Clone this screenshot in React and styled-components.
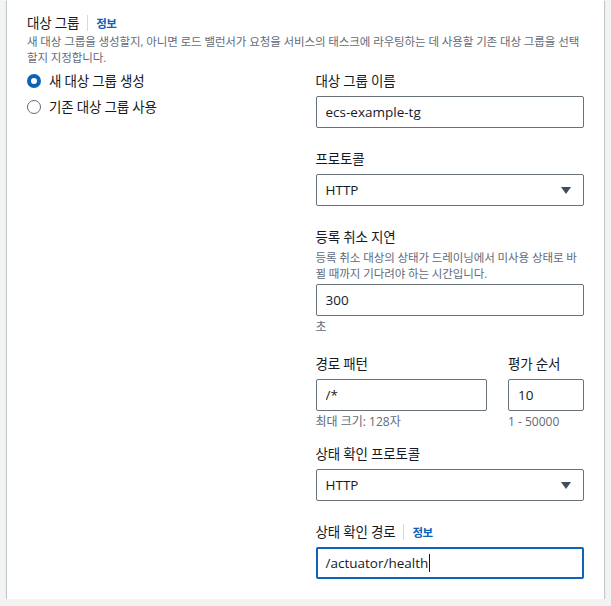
import styled, { createGlobalStyle } from "styled-components";

const GlobalStyle = createGlobalStyle`
  body {
    margin: 0;
    background: #f2f3f3;
    font-family: "Open Sans", "Noto Sans CJK KR", sans-serif;
    color: #16191f;
  }
`;

export default function App() {
  return (
    <>
      <GlobalStyle />
      <Panel>
        <Header>
          <Title>대상 그룹</Title>
          <Divider />
          <InfoLink>정보</InfoLink>
        </Header>
        <Description>
          새 대상 그룹을 생성할지, 아니면 로드 밸런서가 요청을 서비스의 태스크에 라우팅하는 데 사용할 기존 대상 그룹을 선택
          <br />
          할지 지정합니다.
        </Description>
        <Grid>
          <RadioList>
            <RadioRow>
              <RadioDot $checked />
              <RadioLabel>새 대상 그룹 생성</RadioLabel>
            </RadioRow>
            <RadioRow>
              <RadioDot />
              <RadioLabel>기존 대상 그룹 사용</RadioLabel>
            </RadioRow>
          </RadioList>

          <Column>
            <Field>
              <Label>대상 그룹 이름</Label>
              <TextInput readOnly value="ecs-example-tg" />
            </Field>

            <Field>
              <Label>프로토콜</Label>
              <SelectBox>
                <span>HTTP</span>
                <SelectArrow />
              </SelectBox>
            </Field>

            <Field>
              <Label>등록 취소 지연</Label>
              <FieldDescription>
                등록 취소 대상의 상태가 드레이닝에서 미사용 상태로 바
                <br />
                뀔 때까지 기다려야 하는 시간입니다.
              </FieldDescription>
              <TextInput $tight readOnly value="300" />
              <Hint>초</Hint>
            </Field>

            <SplitRow>
              <Field>
                <Label>경로 패턴</Label>
                <TextInput readOnly value="/*" />
                <Hint>최대 크기: 128자</Hint>
              </Field>
              <Field>
                <Label>평가 순서</Label>
                <TextInput readOnly value="10" />
                <Hint>1 - 50000</Hint>
              </Field>
            </SplitRow>

            <Field>
              <Label>상태 확인 프로토콜</Label>
              <SelectBox>
                <span>HTTP</span>
                <SelectArrow />
              </SelectBox>
            </Field>

            <Field>
              <LabelRow>
                <Label>상태 확인 경로</Label>
                <Divider />
                <InfoLink>정보</InfoLink>
              </LabelRow>
              <FocusedInput role="textbox">
                /actuator/health
                <Caret />
              </FocusedInput>
            </Field>
          </Column>
        </Grid>
      </Panel>
    </>
  );
}

function SelectArrow() {
  return (
    <svg width="10" height="7" viewBox="0 0 10 7">
      <polygon points="0,0 10,0 5,7" fill="#414d5c" />
    </svg>
  );
}

const Panel = styled.div`
  margin: 0 7px;
  padding: 12px 20px 20px 20px;
  background: #ffffff;
  box-shadow: 0 1px 1px 0 rgba(0, 28, 36, 0.3),
    1px 1px 1px 0 rgba(0, 28, 36, 0.15),
    -1px 1px 1px 0 rgba(0, 28, 36, 0.15);
`;

const Header = styled.div`
  display: flex;
  align-items: center;
  height: 22px;
`;

const LabelRow = styled(Header)``;

const Title = styled.span`
  font-size: 13.5px;
  letter-spacing: -0.2px;
  line-height: 22px;
`;

const Divider = styled.span`
  width: 1px;
  height: 16px;
  background: #d5dbdb;
  margin: 0 8px;
`;

const InfoLink = styled.a`
  font-size: 11.5px;
  font-weight: 700;
  letter-spacing: -0.5px;
  color: #0c63b8;
  cursor: pointer;
`;

const Description = styled.p`
  margin: 0;
  font-size: 11.5px;
  letter-spacing: -0.1px;
  line-height: 16px;
  white-space: nowrap;
  color: #5f6b7a;
`;

const Grid = styled.div`
  display: grid;
  grid-template-columns: 1fr 1fr;
  column-gap: 20px;
  margin-top: 4px;
`;

const RadioList = styled.div`
  display: flex;
  flex-direction: column;
  gap: 4px;
`;

const RadioRow = styled.label`
  display: flex;
  align-items: center;
  gap: 8px;
  height: 22px;
`;

const RadioDot = styled.span`
  width: 14px;
  height: 14px;
  box-sizing: border-box;
  border-radius: 50%;
  background: #ffffff;
  border: ${(p) => (p.$checked ? "4px solid #0c63b8" : "1.5px solid #5f6b7a")};
`;

const RadioLabel = styled.span`
  font-size: 13.5px;
  letter-spacing: -0.2px;
  line-height: 22px;
`;

const Column = styled.div`
  display: flex;
  flex-direction: column;
  gap: 20px;
`;

const Field = styled.div`
  display: flex;
  flex-direction: column;
  min-width: 0;
`;

const Label = styled.label`
  font-size: 13.5px;
  letter-spacing: -0.2px;
  line-height: 22px;
`;

const FieldDescription = styled.p`
  margin: 2px 0 0;
  font-size: 11.5px;
  letter-spacing: -0.1px;
  line-height: 16px;
  white-space: nowrap;
  color: #5f6b7a;
`;

const TextInput = styled.input`
  box-sizing: border-box;
  width: 100%;
  height: 32px;
  margin-top: ${(p) => (p.$tight ? "2px" : "4px")};
  padding: 0 9px;
  border: 1px solid #687078;
  border-radius: 2px;
  background: #ffffff;
  font-family: "Open Sans", "Noto Sans CJK KR", sans-serif;
  font-size: 13.5px;
  color: #16191f;
  outline: none;
`;

const SelectBox = styled.div`
  box-sizing: border-box;
  display: flex;
  align-items: center;
  justify-content: space-between;
  height: 32px;
  margin-top: 4px;
  padding: 0 12px 0 9px;
  border: 1px solid #687078;
  border-radius: 2px;
  font-size: 13.5px;
`;

const Hint = styled.span`
  margin: 3px 0 -2px;
  font-size: 12px;
  line-height: 16px;
  color: #5f6b7a;
`;

const SplitRow = styled.div`
  display: grid;
  grid-template-columns: 1fr 76px;
  column-gap: 21px;
  margin-bottom: -5px;
`;

const FocusedInput = styled.div`
  box-sizing: border-box;
  display: flex;
  align-items: center;
  height: 32px;
  margin-top: 4px;
  padding: 0 8px;
  border: 2px solid #0c63b8;
  border-radius: 2px;
  font-size: 13.5px;
`;

const Caret = styled.span`
  width: 1px;
  height: 18px;
  margin-left: 1px;
  background: #16191f;
`;
